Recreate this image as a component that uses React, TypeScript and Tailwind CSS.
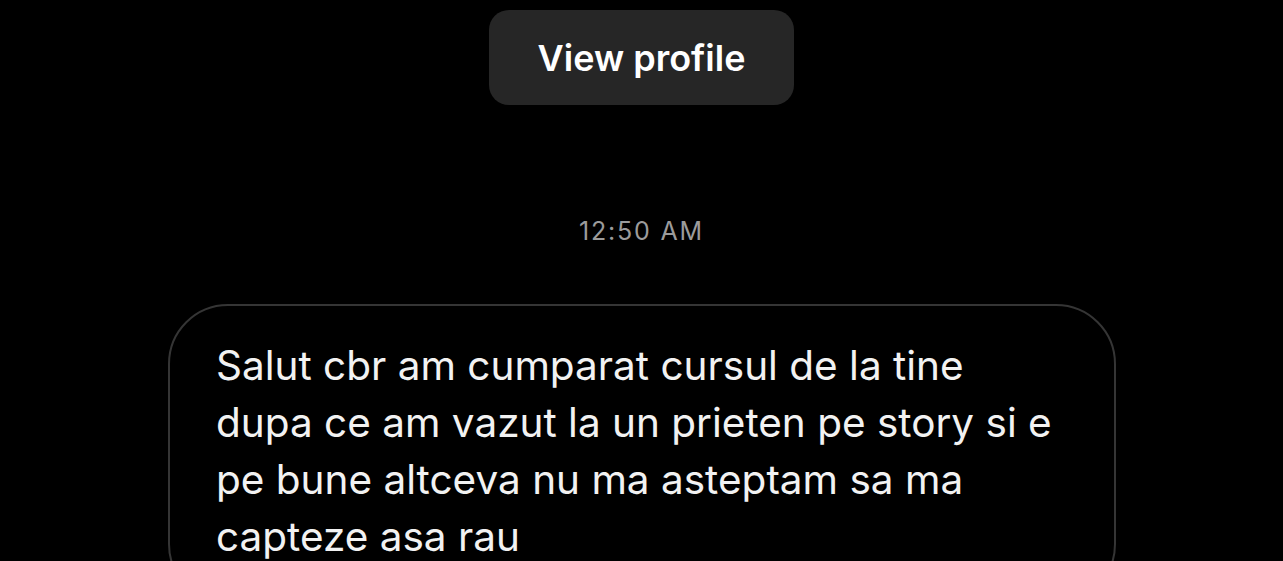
import React from 'react';

const font = { fontFamily: 'Inter, "Noto Sans", sans-serif' };

export default function App() {
  return (
    <div className="w-[1283px] h-[561px] bg-black overflow-hidden flex flex-col items-center" style={font}>
      {/* View profile button */}
      <button className="shrink-0 mt-[10px] w-[305px] h-[95px] rounded-[20px] bg-[#262626] text-white text-[36px] font-semibold flex items-center justify-center">
        View profile
      </button>

      {/* Timestamp */}
      <div className="shrink-0 mt-[111px] text-[25px] leading-[30px] text-[#9b9b9b] tracking-[1.8px]">12:50 AM</div>

      {/* Message bubble */}
      <div className="shrink-0 mt-[58px] self-start ml-[168px] w-[948px] h-[300px] rounded-[60px] border-2 border-[#353535] pl-[46px] pr-[40px] pt-[31px]">
        <p className="text-[40.5px] leading-[57px] text-[#f2f2f2] whitespace-nowrap">
          Salut cbr am cumparat cursul de la tine
          <br />
          dupa ce am vazut la un prieten pe story si e
          <br />
          pe bune altceva nu ma asteptam sa ma
          <br />
          capteze asa rau
        </p>
      </div>
    </div>
  );
}
